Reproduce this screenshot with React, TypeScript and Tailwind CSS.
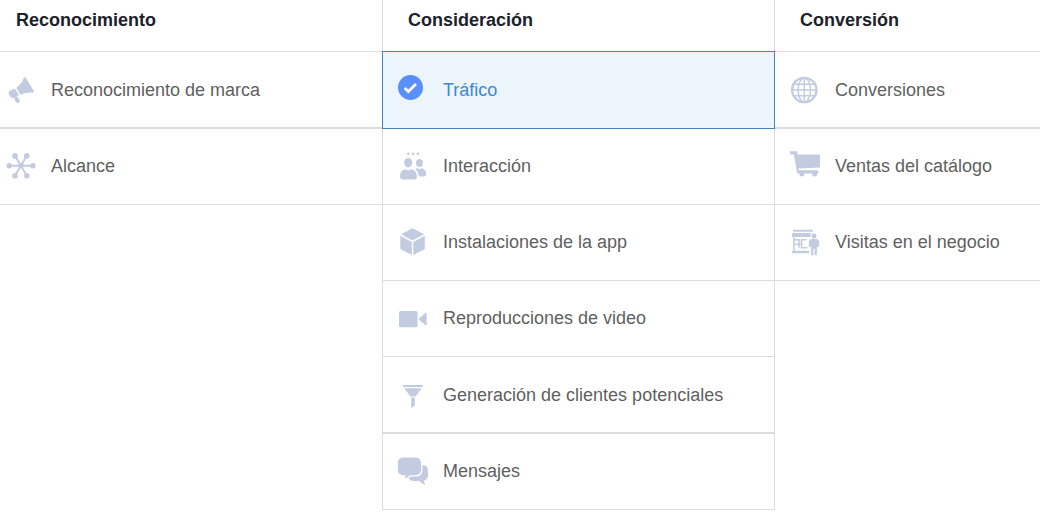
import { useState } from "react";
import type { ReactNode } from "react";
import clsx from "clsx";

interface Objective {
    id: string;
    label: string;
    icon: ReactNode;
    thickLine?: boolean;
}

interface ObjectiveGroup {
    title: string;
    items: Objective[];
}

function Icon({ children }: { children: ReactNode }) {
    return (
        <svg viewBox="0 0 30 30" className="w-[30px] h-[30px] shrink-0 overflow-visible fill-current" aria-hidden="true">
            {children}
        </svg>
    );
}

const MegaphoneIcon = () => (
    <Icon>
        <path d="M18 2.600q1.200-1 2 .3l7.700 13q.7 1.500-.8 1.700-7-.6-12.400 2.200L10.200 12.800Q16 9 18 2.600Z" />
        <path d="M9.200 13.800l3.700 6.500-4.100 2.400q-2.600 1-4.100-.4l-2.100-3.500q-.5-2.300 1.800-3.300Z" />
        <path d="M7.800 23l4-1.600.6 2.200 1.500 1.400-.3 2.200-2.200.8q-1.600-.4-2.100-1.900Z" />
    </Icon>
);

const NetworkIcon = () => (
    <Icon>
        <path d="M3 14.700H27M9 4.700l11.800 20M20.800 4.700L9 24.700" className="stroke-current" strokeWidth="1.900" />
        <circle cx="15" cy="14.700" r="2.700" />
        <circle cx="3.200" cy="14.700" r="2.700" />
        <circle cx="27" cy="14.700" r="2.700" />
        <circle cx="9" cy="4.900" r="2.800" />
        <circle cx="20.800" cy="4.900" r="2.800" />
        <circle cx="9" cy="24.700" r="2.800" />
        <circle cx="20.800" cy="24.700" r="2.800" />
    </Icon>
);

const CheckIcon = () => (
    <Icon>
        <circle cx="12.500" cy="12.500" r="12.500" className="fill-[#5890ff]" />
        <path d="M6.700 13l3.600 3.500 7.700-7.500" className="fill-none stroke-white" strokeWidth="2.700" />
    </Icon>
);

const PeopleIcon = () => (
    <Icon>
        <circle cx="10.300" cy="2.700" r="1.300" />
        <circle cx="15" cy="2.700" r="1.300" />
        <circle cx="20" cy="2.700" r="1.300" />
        <ellipse cx="10.200" cy="11.700" rx="4.100" ry="4.800" />
        <ellipse cx="21.500" cy="12" rx="3.400" ry="3.900" />
        <path d="M2 25.500c0-4 2.500-6.700 5.200-7.200q3.200 1.700 6 0c3 .5 5.800 3.200 5.800 7.200q0 3-3 3H5q-3 0-3-3Z" />
        <path d="M17.300 18.200l1.600-.9q2.600 1.500 5 0c2.700.5 4.300 2.800 4.300 5.700q0 2.400-2.300 2.400h-5.200q0-4.500-3.400-7.200Z" />
    </Icon>
);

const BoxIcon = () => (
    <Icon>
        <path d="M14.600 1.300l11.500 5.900-11.500 6.300L3 7.200Z" />
        <path d="M2.300 8.800l11.500 6.300V28L3 22.500q-.7-.4-.7-1.200Z" />
        <path d="M26.800 8.800l-11.500 6.300V28l10.800-5.500q.7-.4.7-1.200Z" />
    </Icon>
);

const VideoIcon = () => (
    <Icon>
        <rect x="1" y="8" width="18.500" height="16.200" rx="1.500" />
        <path d="M20.300 16l7-6q1.300-.7 1.300.8v10.600q0 1.500-1.300.7Z" />
    </Icon>
);

const FunnelIcon = () => (
    <Icon>
        <path d="M5 5h20v1.900H5ZM6.200 8.200h17.600L17.600 16.600h-5.200ZM13.200 17.600h3.600v8l-3.600 2.600Z" />
    </Icon>
);

const ChatIcon = () => (
    <Icon>
        <path d="M15 9h9.500q5.500 0 5.500 6v4q0 4.700-4 5.600.2 2 1.300 4.400-4-1.200-6-4H16q-4.500 0-6-4Z" />
        <path
            d="M5.500 1.500h11.800q5.700 0 5.700 5.700v6.300q0 5.700-5.700 5.700h-5.600q-1.700 2.600-4.700 3.600.6-1.800.5-3.600h-2q-5.700 0-5.700-5.700V7.200q0-5.700 5.700-5.700Z"
            className="stroke-white"
            strokeWidth="2.800"
            paintOrder="stroke"
        />
    </Icon>
);

const GlobeIcon = () => (
    <Icon>
        <g className="fill-none stroke-current" strokeWidth="1.500">
            <circle cx="14.300" cy="15" r="12.200" strokeWidth="2.300" />
            <ellipse cx="14.300" cy="15" rx="6.200" ry="12" />
            <path d="M14.300 3v24M2.500 15h23.600M4.500 9.300h19.600M4.500 20.700h19.600" />
        </g>
    </Icon>
);

const CartIcon = () => (
    <Icon>
        <path d="M0 .2h6.800l1 3.200H30v13L8.400 17.400l.4 1.800h19.400v3.200h-1q0 3-2.600 3t-2.600-3H14.500q0 3-2.600 3t-2.600-3H7.200L3.900 3.600H0Z" />
    </Icon>
);

const StoreIcon = () => (
    <Icon>
        <path d="M3.200 2.800h19.600v2H3.200ZM2 6h18.500v4H2ZM2 23.800h17.200v2.400H2Z" />
        <path
            d="M3.900 10v13.800M3.900 12.800H9v8M3.900 17.200H10.500M16.600 12.800H11.500v8h6"
            className="fill-none stroke-current"
            strokeWidth="1.500"
        />
        <circle cx="24" cy="8.900" r="2.500" />
        <path d="M21.200 12h5.600q2.400.4 2.400 3v4.700h-2.300v8.500h-2.300v-6.500h-1.200v6.500h-2.300v-8.500h-2.300V15q0-2.600 2.400-3Z" />
    </Icon>
);

const groups: ObjectiveGroup[] = [
    {
        title: "Reconocimiento",
        items: [
            { id: "brand", label: "Reconocimiento de marca", icon: <MegaphoneIcon />, thickLine: true },
            { id: "reach", label: "Alcance", icon: <NetworkIcon /> },
        ],
    },
    {
        title: "Consideración",
        items: [
            { id: "traffic", label: "Tráfico", icon: <CheckIcon />, thickLine: true },
            { id: "engagement", label: "Interacción", icon: <PeopleIcon /> },
            { id: "installs", label: "Instalaciones de la app", icon: <BoxIcon /> },
            { id: "video", label: "Reproducciones de video", icon: <VideoIcon /> },
            { id: "leads", label: "Generación de clientes potenciales", icon: <FunnelIcon />, thickLine: true },
            { id: "messages", label: "Mensajes", icon: <ChatIcon /> },
        ],
    },
    {
        title: "Conversión",
        items: [
            { id: "conversions", label: "Conversiones", icon: <GlobeIcon />, thickLine: true },
            { id: "catalog", label: "Ventas del catálogo", icon: <CartIcon /> },
            { id: "visits", label: "Visitas en el negocio", icon: <StoreIcon /> },
        ],
    },
];

export default function App() {
    const [selected, setSelected] = useState("traffic");

    return (
        <main className="grid grid-cols-[382fr_392fr_266fr] bg-white font-['Liberation_Sans',Arial,sans-serif] text-lg">
            {groups.map((group, index) => (
                <section key={group.title} className={clsx(index > 0 && "border-l border-[#dadce0]")}>
                    <h2
                        className={clsx(
                            "h-[52px] border-b border-[#dadce0] pt-1.5 font-bold text-[#1d2129]",
                            index > 0 ? "pl-[25px]" : "pl-4"
                        )}
                    >
                        {group.title}
                    </h2>
                    <ul>
                        {group.items.map((item) => {
                            const active = item.id === selected;
                            return (
                                <li key={item.id}>
                                    <button
                                        type="button"
                                        aria-pressed={active}
                                        onClick={() => setSelected(item.id)}
                                        className={clsx(
                                            "flex items-center gap-[15px] text-left cursor-pointer",
                                            active
                                                ? "relative -mt-px -mx-px h-[78px] w-[calc(100%+2px)] border border-[#3f86b4] bg-[#ecf4fc]"
                                                : "w-full border-[#dadce0]",
                                            !active && (item.thickLine ? "h-[77px] border-b-2" : "h-[76px] border-b pb-px"),
                                            index > 0 ? "pl-[15px]" : "pl-1.5"
                                        )}
                                    >
                                        <span className="text-[#c3cbe1]">{item.icon}</span>
                                        <span className={active ? "text-[#3b8ad0]" : "text-[#5f5f5f]"}>{item.label}</span>
                                    </button>
                                </li>
                            );
                        })}
                    </ul>
                </section>
            ))}
        </main>
    );
}
